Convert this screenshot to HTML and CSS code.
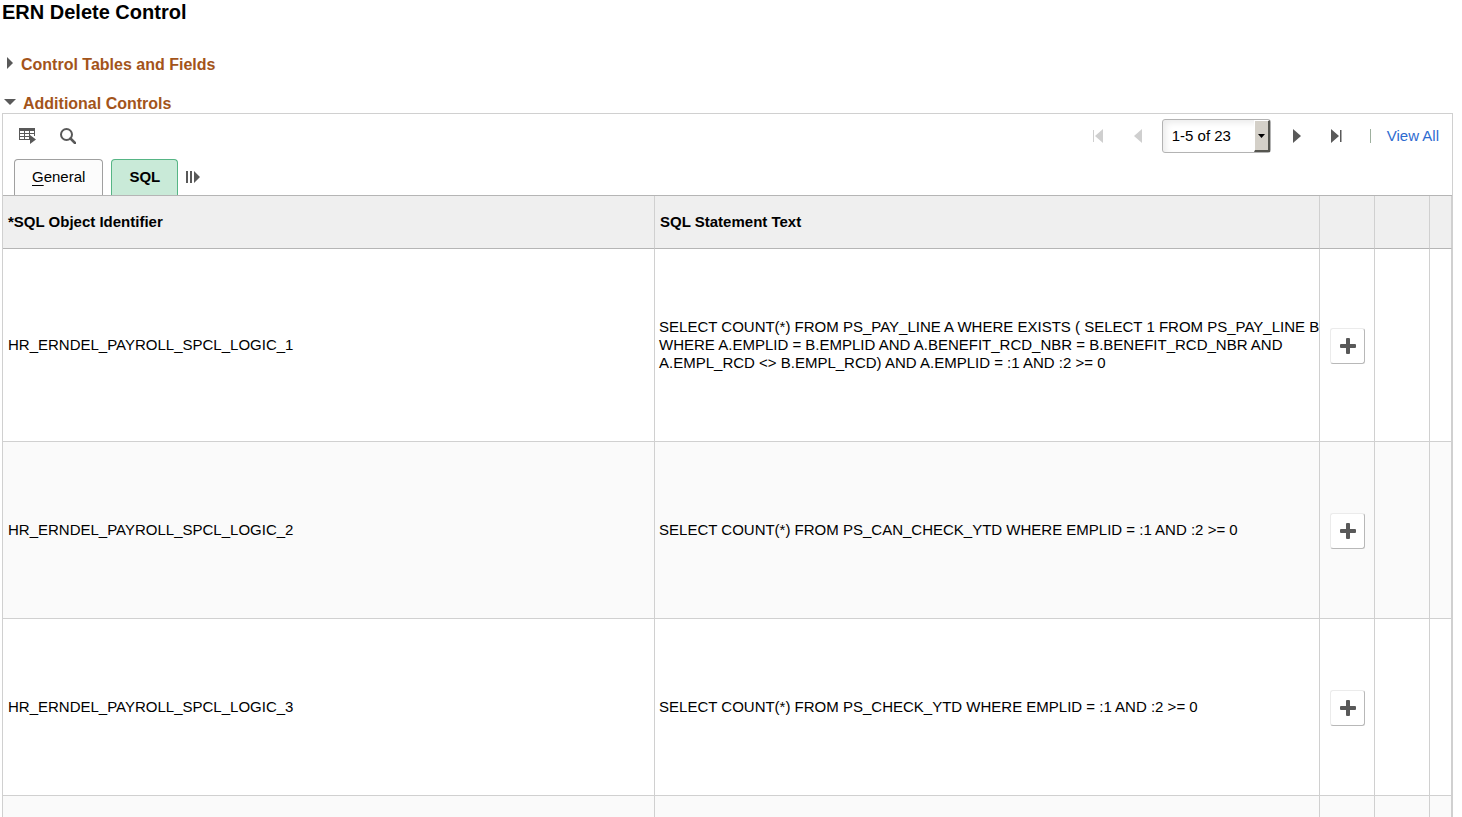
FILE: index.html
```html
<!DOCTYPE html>
<html lang="en">
<head>
    <meta charset="UTF-8">
    <meta name="viewport" content="width=device-width, initial-scale=1.0">
    <title>ERN Delete Control</title>
    <link rel="stylesheet" href="styles.css">
</head>
<body>
    <h1 class="page-title">ERN Delete Control</h1>

    <h2 class="section collapsed">
        <button type="button" class="section-toggle" aria-expanded="false">
            <svg width="7" height="12" viewBox="0 0 7 12"><path d="M1 0L7 6L1 12Z" fill="#595959"/></svg>
            Control Tables and Fields
        </button>
    </h2>
    <h2 class="section expanded">
        <button type="button" class="section-toggle" aria-expanded="true">
            <svg width="12" height="6" viewBox="0 0 12 6"><path d="M0 0H12L6 6Z" fill="#595959"/></svg>
            Additional Controls
        </button>
    </h2>

    <div class="grid">
        <div class="toolbar">
            <div class="tools">
                <button type="button" class="icon-button" aria-label="Grid actions">
                    <svg width="17" height="16" viewBox="0 0 17 16" shape-rendering="crispEdges">
                        <path d="M0 0H16V3H0ZM0 3H1V12H0ZM5 3H6V12H5ZM10 3H11V12H10ZM15 3H16V8H15ZM0 5H16V6H0ZM0 8H11V9H0ZM0 11H11V12H0Z" fill="#595959"/>
                        <path d="M11 7L17 11.500L11 16Z" fill="#595959" shape-rendering="auto"/>
                    </svg>
                </button>
                <button type="button" class="icon-button" aria-label="Find">
                    <svg width="16" height="16" viewBox="0 0 16 16" fill="none" stroke="#595959" stroke-width="2"><circle cx="6.500" cy="6.500" r="5.500"/><path d="M10.500 10.500L15 15" stroke-width="2.500" stroke-linecap="round"/></svg>
                </button>
            </div>
            <div class="pager">
                <button type="button" class="icon-button first" aria-label="First row" disabled>
                    <svg width="12" height="14" viewBox="0 0 12 14"><path d="M1 1H2V13H1ZM11 0V14L3 7Z" fill="#cfcfcf"/></svg>
                </button>
                <button type="button" class="icon-button" aria-label="Previous row" disabled>
                    <svg width="8" height="14" viewBox="0 0 8 14"><path d="M8 0V14L0 7Z" fill="#cfcfcf"/></svg>
                </button>
                <div class="range">
                    <select aria-label="Rows shown">
                        <option>1-5 of 23</option>
                    </select>
                    <span class="range-arrow"><svg width="7" height="4" viewBox="0 0 7 4"><path d="M0 0H7L3.500 4Z"/></svg></span>
                </div>
                <button type="button" class="icon-button" aria-label="Next row">
                    <svg width="8" height="14" viewBox="0 0 8 14"><path d="M0 0L8 7L0 14Z" fill="#595959"/></svg>
                </button>
                <button type="button" class="icon-button last" aria-label="Last row">
                    <svg width="11" height="14" viewBox="0 0 11 14"><path d="M0 0L8 7L0 14ZM9 1H10.500V13H9Z" fill="#595959"/></svg>
                </button>
                <span class="divider"></span>
                <a href="#" class="view-all">View All</a>
            </div>
        </div>

        <div class="tabs">
            <button type="button" class="tab"><u>G</u>eneral</button>
            <button type="button" class="tab active">SQL</button>
            <button type="button" class="icon-button" aria-label="Show all columns">
                <svg width="14" height="12" viewBox="0 0 14 12"><path d="M0 0H2V12H0ZM4 0H6V12H4ZM8 0L14 6L8 12Z" fill="#595959"/></svg>
            </button>
        </div>

        <table class="rows">
            <colgroup>
                <col class="col-id">
                <col>
                <col class="col-action">
                <col class="col-action">
                <col class="col-end">
            </colgroup>
            <thead>
                <tr>
                    <th>*SQL Object Identifier</th>
                    <th>SQL Statement Text</th>
                    <th></th>
                    <th></th>
                    <th></th>
                </tr>
            </thead>
            <tbody>
                <tr class="tall">
                    <td>HR_ERNDEL_PAYROLL_SPCL_LOGIC_1</td>
                    <td class="statement">SELECT COUNT(*) FROM PS_PAY_LINE A WHERE EXISTS ( SELECT 1 FROM PS_PAY_LINE B<br>WHERE A.EMPLID = B.EMPLID AND A.BENEFIT_RCD_NBR = B.BENEFIT_RCD_NBR AND<br>A.EMPL_RCD &lt;&gt; B.EMPL_RCD) AND A.EMPLID = :1 AND :2 &gt;= 0</td>
                    <td class="action"><button type="button" class="add" aria-label="Add row"><svg width="16" height="16" viewBox="0 0 16 16" fill="#595959"><rect x="6" width="4" height="16" rx="1"/><rect y="6" width="16" height="4" rx="1"/></svg></button></td>
                    <td></td>
                    <td></td>
                </tr>
                <tr>
                    <td>HR_ERNDEL_PAYROLL_SPCL_LOGIC_2</td>
                    <td class="statement">SELECT COUNT(*) FROM PS_CAN_CHECK_YTD WHERE EMPLID = :1 AND :2 &gt;= 0</td>
                    <td class="action"><button type="button" class="add" aria-label="Add row"><svg width="16" height="16" viewBox="0 0 16 16" fill="#595959"><rect x="6" width="4" height="16" rx="1"/><rect y="6" width="16" height="4" rx="1"/></svg></button></td>
                    <td></td>
                    <td></td>
                </tr>
                <tr>
                    <td>HR_ERNDEL_PAYROLL_SPCL_LOGIC_3</td>
                    <td class="statement">SELECT COUNT(*) FROM PS_CHECK_YTD WHERE EMPLID = :1 AND :2 &gt;= 0</td>
                    <td class="action"><button type="button" class="add" aria-label="Add row"><svg width="16" height="16" viewBox="0 0 16 16" fill="#595959"><rect x="6" width="4" height="16" rx="1"/><rect y="6" width="16" height="4" rx="1"/></svg></button></td>
                    <td></td>
                    <td></td>
                </tr>
                <tr class="short">
                    <td></td>
                    <td></td>
                    <td></td>
                    <td></td>
                    <td></td>
                </tr>
            </tbody>
        </table>
    </div>
</body>
</html>
```
FILE: styles.css
```css
* {
    box-sizing: border-box;
}
body {
    margin: 0;
    padding: 0 9px 0 2px;
    background-color: #fff;
    color: #000;
    font-family: "Liberation Sans", Arial, sans-serif;
    font-size: 15px;
    line-height: 18px;
}
button, select {
    font: inherit;
    color: inherit;
}
button {
    padding: 0;
    border: none;
    background: none;
    cursor: pointer;
}
svg {
    display: block;
}
.page-title {
    margin: 0 0 29px;
    font-size: 20px;
    line-height: 24px;
}
.section {
    margin: 0;
    font-size: 16px;
    line-height: 20px;
    color: #a3541a;
}
.section-toggle {
    display: flex;
    align-items: center;
}
.collapsed {
    padding: 2px 4px;
    margin-bottom: 17px;
}
.collapsed .section-toggle {
    gap: 8px;
}
.expanded {
    height: 19px;
    padding: 0 2px;
}
.expanded .section-toggle {
    gap: 7px;
}
.section svg {
    margin-bottom: 4px;
}
.grid {
    border: 1px solid #d0d0d0;
    border-bottom: none;
}
.toolbar {
    display: flex;
    justify-content: space-between;
    align-items: center;
    height: 44px;
    padding: 0 13px 0 16px;
}
.tools, .pager {
    display: flex;
    align-items: center;
}
.tools {
    gap: 24px;
}
.icon-button:disabled {
    cursor: default;
}
.pager {
    gap: 20px;
}
.first {
    margin-right: 10px;
}
.range {
    position: relative;
    margin-right: 2px;
}
.range select {
    display: block;
    width: 109px;
    height: 34px;
    padding: 0 9px 1px;
    border: 1px solid #b3b3b3;
    border-radius: 3px;
    background-color: #fff;
    box-shadow: inset 3px 3px 6px #ececec;
    appearance: none;
}
.range-arrow {
    position: absolute;
    top: 1px;
    right: 1px;
    bottom: 1px;
    display: flex;
    align-items: center;
    justify-content: center;
    width: 16px;
    border: 1px solid #fff;
    border-right: 2px solid #565650;
    border-bottom: 2px solid #565650;
    background-color: #d4d0c8;
    pointer-events: none;
}
.last {
    margin: 0 8px 0 10px;
}
.divider {
    width: 1px;
    height: 14px;
    margin-right: -4px;
    background-color: #9eb09e;
}
.view-all {
    color: #2d6bd0;
    text-decoration: none;
}
.tabs {
    display: flex;
    align-items: center;
    gap: 8px;
    padding: 1px 11px 0;
}
.tab {
    height: 36px;
    padding: 0 17px 1px;
    border: 1px solid #a0a0a0;
    border-bottom: none;
    border-radius: 4px 4px 0 0;
    background-color: #fcfcfc;
}
.tab u {
    text-underline-offset: 3px;
}
.tab.active {
    border-color: #56b585;
    background-color: #c9ead8;
    font-weight: bold;
}
.rows {
    width: 100%;
    table-layout: fixed;
    border-collapse: separate;
    border-spacing: 0;
    border-top: 1px solid #b5b5b5;
}
.col-id {
    width: 45%;
}
.col-action {
    width: 55px;
}
.col-end {
    width: 22px;
}
.rows th, .rows td {
    padding: 0 5px;
    border-right: 1px solid #d0d0d0;
    border-bottom: 1px solid #d0d0d0;
    text-align: left;
    vertical-align: middle;
}
.rows th {
    height: 53px;
    border-bottom-color: #b5b5b5;
    background-color: #efefef;
}
.rows td {
    height: 177px;
}
.rows .tall td {
    height: 193px;
}
.rows .short td {
    height: 22px;
    border-bottom: none;
}
.rows tr:nth-child(even) td {
    background-color: #fafafa;
}
.rows .statement {
    padding: 0 0 0 4px;
    white-space: nowrap;
}
.rows .action {
    padding: 2px 10px 0;
}
.add {
    display: flex;
    align-items: center;
    justify-content: center;
    width: 35px;
    height: 36px;
    border: 1px solid #ebebeb;
    border-right-color: #b8b8b8;
    border-bottom-color: #b8b8b8;
    border-radius: 3px;
    background-color: #fff;
}
```
